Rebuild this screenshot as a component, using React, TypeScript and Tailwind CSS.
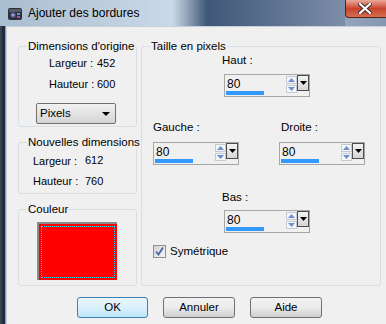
import React from "react"

function Spin() {
  return (
    <div className="flex w-[11px] flex-col gap-[1px] pt-[1px]">
      <div className="flex h-[8px] items-center justify-center border border-[#c3cad6] bg-[#f4f6fa]">
        <svg width="7" height="4" viewBox="0 0 7 4">
          <path d="M0 4 L3.5 0 L7 4 Z" fill="#6f8fd0" />
        </svg>
      </div>
      <div className="flex h-[8px] items-center justify-center border border-[#c3cad6] bg-[#f4f6fa]">
        <svg width="7" height="4" viewBox="0 0 7 4">
          <path d="M0 0 L7 0 L3.5 4 Z" fill="#6f8fd0" />
        </svg>
      </div>
    </div>
  )
}

function NumField({ value }: { value: string }) {
  return (
    <div className="flex h-[23px] w-[86px] border border-[#a6a6a6] bg-[#f0f0f0]">
      <div className="flex flex-1 flex-col">
        <span className="pl-[2px] pt-[3px] text-[12px] leading-[13px]">{value}</span>
        <div className="mb-[1px] ml-[1px] mt-auto h-[4px] w-[38px] bg-[#3399ff]" />
      </div>
      <Spin />
      <div className="flex h-[16px] w-[12px] items-center justify-center border border-[#4d4d4d] bg-gradient-to-b from-[#f3f3f3] to-[#d6d6d6]">
        <svg width="7" height="4" viewBox="0 0 7 4">
          <path d="M0 0 L7 0 L3.5 4 Z" fill="#000" />
        </svg>
      </div>
    </div>
  )
}

function Group({
  title,
  className,
  children,
}: {
  title: string
  className: string
  children?: React.ReactNode
}) {
  return (
    <fieldset className={`m-0 min-w-0 rounded-[3px] border border-[#d5dfe5] p-0 ${className}`}>
      <legend className="ml-[8px] whitespace-nowrap px-[1px] leading-[13px]">{title}</legend>
      {children}
    </fieldset>
  )
}

function Btn({ label, primary }: { label: string; primary?: boolean }) {
  return (
    <button
      className={
        primary
          ? "h-[21px] w-[71px] rounded-[3px] border border-[#3c7fb1] bg-gradient-to-b from-[#eaf6fd] via-[#d9f0fc] to-[#bee6fd] leading-[13px]"
          : "h-[21px] w-[72px] rounded-[3px] border border-[#707070] bg-gradient-to-b from-[#f2f2f2] via-[#ebebeb] to-[#cfcfcf] leading-[13px]"
      }
    >
      {label}
    </button>
  )
}

export default function App() {
  return (
    <div
      className="flex h-[324px] w-[386px] flex-col overflow-hidden whitespace-nowrap text-[11.5px] text-black"
      style={{ fontFamily: '"Liberation Sans", Arial, sans-serif' }}
    >
      {/* title bar */}
      <div className="flex h-[26px] shrink-0 bg-gradient-to-r from-[#a9bdd0] via-[#cfdcea] to-[#8596b0]">
        <div className="flex flex-1 items-center bg-gradient-to-r from-transparent from-[50%] via-[#3f5778] via-[60%] to-[#7d8ea9]">
          <svg className="ml-[7px] mt-[1px]" width="16" height="16" viewBox="0 0 16 16">
            <rect x="1" y="2" width="14" height="12" rx="2" fill="#2c2f3a" />
            <rect x="2" y="3" width="12" height="3" fill="#555a68" />
            <circle cx="6" cy="9" r="3" fill="#4a4f7a" />
            <circle cx="6" cy="9" r="1.5" fill="#9aa4e0" />
            <rect x="10" y="7" width="3" height="2" fill="#6b8fd6" />
            <rect x="10" y="10" width="3" height="2" fill="#b04ab0" />
          </svg>
          <span className="ml-[5px] text-[12px] leading-[15px]">Ajouter des bordures</span>
        </div>
        <div className="mr-[-3px] flex h-[18px] w-[44px] shrink-0 items-center justify-center rounded-bl-[4px] border border-t-0 border-[#5b2018] bg-gradient-to-b from-[#e9a89a] via-[#c8432d] to-[#d76d4f]">
          <svg width="14" height="11" viewBox="0 0 14 11" className="mr-[4px]">
            <path d="M2 1 L12 10 M12 1 L2 10" stroke="#3a2a2a" strokeWidth="4" strokeLinecap="square" />
            <path d="M2 1 L12 10 M12 1 L2 10" stroke="#fff" strokeWidth="2.2" strokeLinecap="square" />
          </svg>
        </div>
      </div>

      <div className="flex flex-1">
        {/* left frame */}
        <div className="flex w-[6px] shrink-0">
          <div className="w-[2px] bg-[#3d434c]" />
          <div className="w-[3px] bg-[#1e2c42]" />
          <div className="w-[1px] bg-[#8d9db2]" />
        </div>

        {/* dialog body */}
        <div className="flex flex-1 flex-col border-l border-t border-[#c5cfdb] bg-[#f0f0f0] pl-[11px] pt-[13px] leading-[13px]">
          <div className="flex gap-[4px]">
            <div className="flex w-[119px] flex-col gap-[9px]">
              <Group title="Dimensions d'origine" className="h-[87px]">
                <div className="grid grid-cols-[48px_auto] pl-[30px] text-[11px] leading-[21px]">
                  <span>Largeur :</span>
                  <span>452</span>
                  <span>Hauteur :</span>
                  <span>600</span>
                </div>
                <div className="ml-[17px] mt-[8px] flex h-[21px] w-[80px] items-center justify-between rounded-[2px] border border-[#707070] bg-gradient-to-b from-[#f2f2f2] to-[#d5d5d5] pl-[3px] pr-[5px]">
                  <span>Pixels</span>
                  <svg width="8" height="4" viewBox="0 0 8 4">
                    <path d="M0 0 L8 0 L4 4 Z" fill="#000" />
                  </svg>
                </div>
              </Group>
              <Group title="Nouvelles dimensions" className="h-[58px]">
                <div className="mt-[2px] grid grid-cols-[52px_auto] pl-[14px] text-[11px] leading-[20px]">
                  <span>Largeur :</span>
                  <span className="-mt-[1px]">612</span>
                  <span>Hauteur :</span>
                  <span>760</span>
                </div>
              </Group>
              <Group title="Couleur" className="h-[83px]">
                <div className="ml-[18px] mt-[6px] h-[58px] w-[80px] border-l-2 border-t-2 border-[#8a8a8a] bg-[#ff0000] p-[2px]">
                  <div className="h-full w-full border border-dotted border-[#00e5ff]" />
                </div>
              </Group>
            </div>

            <Group title="Taille en pixels" className="h-[246px] w-[240px]">
              <div className="flex flex-col">
                <div className="ml-[80px] mt-[1px]">Haut :</div>
                <div className="ml-[82px] mt-[7px]">
                  <NumField value="80" />
                </div>
                <div className="mt-[24px] flex">
                  <div className="ml-[11px] flex flex-col">
                    <span>Gauche :</span>
                    <div className="mt-[8px]">
                      <NumField value="80" />
                    </div>
                  </div>
                  <div className="ml-[40px] flex flex-col">
                    <span className="ml-[2px]">Droite :</span>
                    <div className="mt-[8px]">
                      <NumField value="80" />
                    </div>
                  </div>
                </div>
                <div className="ml-[80px] mt-[26px]">Bas :</div>
                <div className="ml-[82px] mt-[6px]">
                  <NumField value="80" />
                </div>
                <div className="ml-[11px] mt-[12px] flex items-center gap-[4px]">
                  <div className="flex h-[13px] w-[13px] items-center justify-center border border-[#8f8f8f] bg-gradient-to-br from-[#d4d4d4] to-[#f4f4f4]">
                    <svg width="9" height="9" viewBox="0 0 9 9">
                      <path d="M1 4.5 L3.5 7.5 L8 0.5" stroke="#4a64a8" strokeWidth="1.8" fill="none" />
                    </svg>
                  </div>
                  <span>Symétrique</span>
                </div>
              </div>
            </Group>
          </div>

          <div className="ml-[59px] mt-[11px] flex gap-[15px]">
            <Btn label="OK" primary />
            <Btn label="Annuler" />
            <Btn label="Aide" />
          </div>
        </div>
      </div>
    </div>
  )
}
